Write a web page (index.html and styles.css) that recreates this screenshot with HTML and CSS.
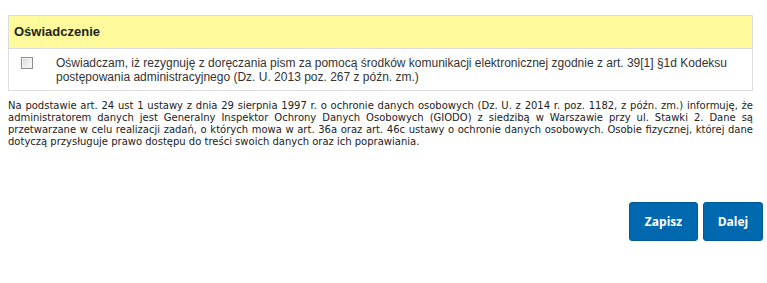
FILE: index.html
```html
<!DOCTYPE html>
<html lang="pl">
<head>
<meta charset="utf-8">
<link rel="stylesheet" href="styles.css">
</head>
<body>
<div class="page">
  <div class="panel">
    <div class="panel-head">Oświadczenie</div>
    <label class="panel-row">
      <span class="cb"><input type="checkbox"></span>
      <span class="row-text">Oświadczam, iż rezygnuję z doręczania pism za pomocą środków komunikacji elektronicznej zgodnie z art. 39[1] §1d Kodeksu postępowania administracyjnego (Dz. U. 2013 poz. 267 z późn. zm.)</span>
    </label>
  </div>
  <p class="note">Na podstawie art. 24 ust 1 ustawy z dnia 29 sierpnia 1997 r. o ochronie danych osobowych (Dz. U. z 2014 r. poz. 1182, z późn. zm.) informuję, że administratorem danych jest Generalny Inspektor Ochrony Danych Osobowych (GIODO) z siedzibą w Warszawie przy ul. Stawki 2. Dane są przetwarzane w celu realizacji zadań, o których mowa w art. 36a oraz art. 46c ustawy o ochronie danych osobowych. Osobie fizycznej, której dane dotyczą przysługuje prawo dostępu do treści swoich danych oraz ich poprawiania.</p>
  <div class="actions">
    <button class="btn btn-save">Zapisz</button>
    <button class="btn btn-next">Dalej</button>
  </div>
</div>
</body>
</html>
```

FILE: styles.css
```css
html, body {
  margin: 0;
  padding: 0;
  background: #fff;
}
.page {
  padding: 15px 4px 0 8px;
}
.panel {
  margin-right: 10px;
  border: 1px solid #dddddd;
  font-family: "Liberation Sans", Arial, sans-serif;
  font-size: 12px;
  color: #333;
}
.panel-head {
  background: #fffa9c;
  border-bottom: 1px solid #dddddd;
  height: 32px;
  line-height: 32px;
  padding-left: 5px;
  font-size: 13px;
  font-weight: bold;
  color: #222;
}
.panel-row {
  display: flex;
  align-items: flex-start;
  padding: 7px 8px 6px 12px;
  line-height: 14px;
}
.cb {
  width: 35px;
  flex: none;
  padding-top: 1px;
}
.cb input {
  -webkit-appearance: none;
  appearance: none;
  display: block;
  margin: 0;
  width: 12px;
  height: 12px;
  border: 1px solid #8f8f8f;
  background: linear-gradient(135deg, #d6d6d6 0%, #f0f0f0 60%, #fbfbfb 100%);
  box-shadow: inset 0 0 0 1px #f4f4f4;
  border-radius: 0;
}
.row-text {
  flex: 1;
}
.note {
  margin: 9px 10px 0 0;
  font-family: "DejaVu Sans", Verdana, sans-serif;
  font-size: 10px;
  line-height: 12px;
  color: #222;
  text-align: justify;
}
.actions {
  display: flex;
  justify-content: flex-end;
  gap: 5px;
  margin-top: 54px;
}
.btn {
  font-family: "Open Sans", Arial, sans-serif;
  font-weight: bold;
  font-size: 12px;
  color: #fff;
  background: #0068ae;
  border: 1px solid #005a98;
  border-radius: 3px;
  height: 39px;
  padding: 0;
  cursor: pointer;
}
.btn-save { width: 69px; }
.btn-next { width: 60px; }
```
